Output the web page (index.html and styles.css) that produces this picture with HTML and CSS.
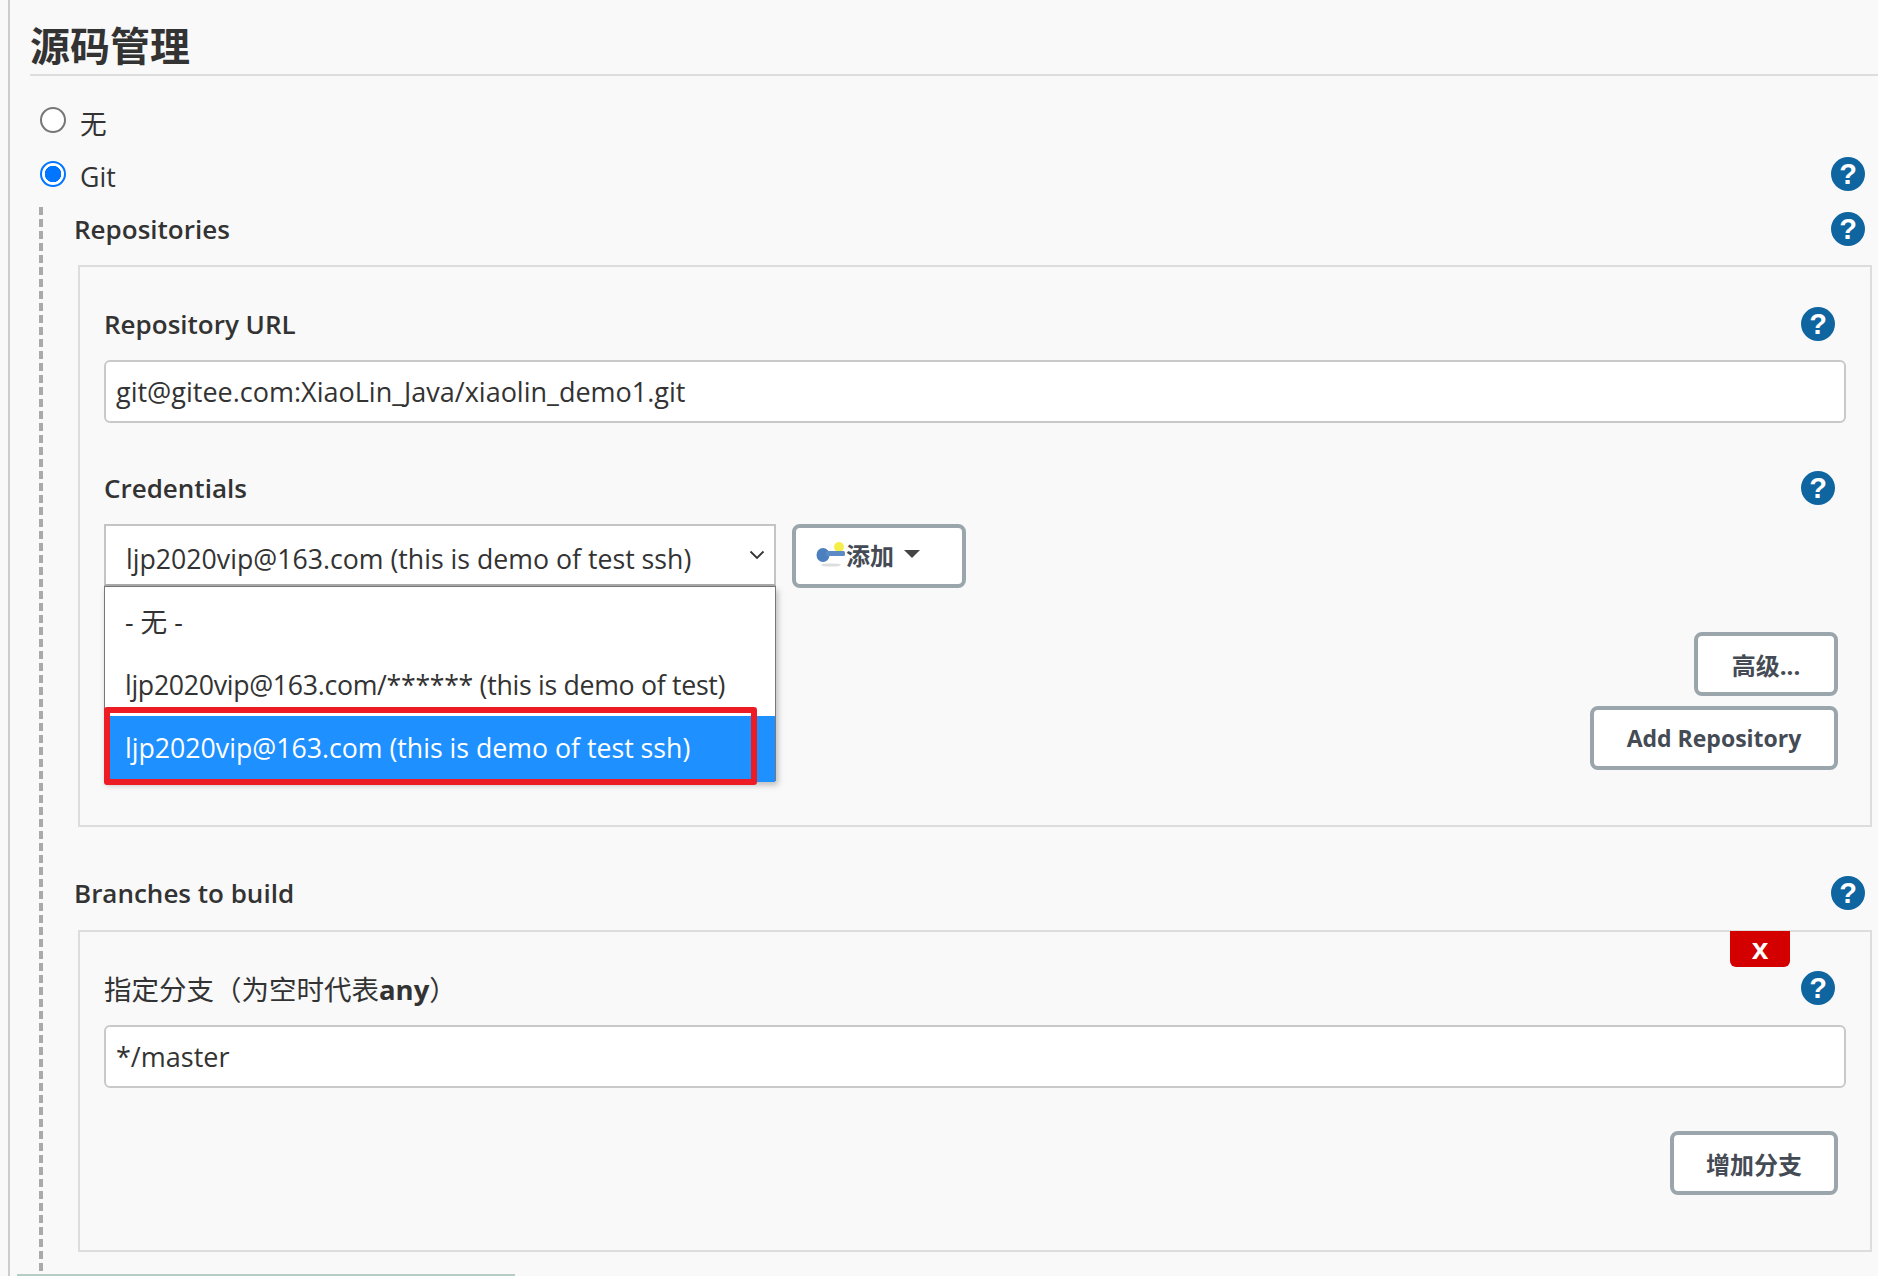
FILE: index.html
```html
<!DOCTYPE html>
<html lang="zh">
<head>
<meta charset="utf-8">
<title>源码管理</title>
<link rel="stylesheet" href="styles.css">
</head>
<body>
<div class="page">
  <h1 class="title">源码管理</h1>
  <div class="radio-row radio-none"><input class="radio" type="radio" name="scm"><span>无</span></div>
  <div class="radio-row radio-git"><input class="radio" type="radio" name="scm" checked><span>Git</span><span class="help help-outer">?</span></div>
  <div class="git-section">
    <div class="label-row repo-heading"><span class="label">Repositories</span><span class="help">?</span></div>
    <div class="box repo-box">
      <div class="label-row url-label"><span class="label">Repository URL</span><span class="help">?</span></div>
      <div class="field">git@gitee.com:XiaoLin_Java/xiaolin_demo1.git</div>
      <div class="label-row cred-label"><span class="label">Credentials</span><span class="help">?</span></div>
      <div class="cred-row">
        <div class="select">
          <span>ljp2020vip@163.com (this is demo of test ssh)</span>
          <svg class="chevron" viewBox="0 0 16 10" width="16" height="10"><path d="M1.5 1.5 L8 8 L14.5 1.5" fill="none" stroke="#333" stroke-width="1.8"/></svg>
          <div class="menu">
            <div class="option">- 无 -</div>
            <div class="option option-tight">ljp2020vip@163.com/****** (this is demo of test)</div>
            <div class="option option-active">ljp2020vip@163.com (this is demo of test ssh)</div>
          </div>
          <div class="annotation"></div>
        </div>
        <button class="btn btn-add">
          <svg class="key" viewBox="0 0 30 28" width="30" height="28"><circle cx="23" cy="7" r="5" fill="#f5ee4a"/><ellipse cx="15" cy="25" rx="10" ry="1.6" fill="#ddd"/><ellipse cx="7" cy="15" rx="6.5" ry="7" fill="#4c7fbe"/><rect x="10" y="11" width="19" height="5" rx="1.5" fill="#5b8bc7"/></svg>
          <span>添加</span><i class="caret"></i>
        </button>
      </div>
      <div class="actions actions-advanced"><button class="btn btn-adv">高级...</button></div>
      <div class="actions"><button class="btn btn-repo">Add Repository</button></div>
    </div>
    <div class="label-row branch-heading"><span class="label">Branches to build</span><span class="help">?</span></div>
    <div class="box branch-box">
      <button class="close">x</button>
      <div class="label-row spec-label"><span class="spec-text">指定分支（为空时代表<b>any</b>）</span><span class="help">?</span></div>
      <div class="field branch-field">*/master</div>
      <div class="actions actions-branch"><button class="btn btn-branch">增加分支</button></div>
    </div>
  </div>
  <div class="bottom-line"></div>
</div>
</body>
</html>
```
FILE: styles.css
```css
* { box-sizing: border-box; }
html, body { margin: 0; padding: 0; height: 1276px; overflow: hidden; }
body {
  background: #f9f9f9;
  color: #333;
  font-family: "Open Sans", "Noto Sans CJK SC", sans-serif;
  font-size: 26.7px;
}
.page {
  position: relative;
  height: 1276px;
  margin-left: 8px;
  border-left: 2px solid #ccc;
  padding-left: 20px;
}
.title {
  margin: 0;
  height: 76px;
  padding-top: 15px;
  border-bottom: 2px solid #ddd;
  font-family: "Noto Sans CJK SC", sans-serif;
  font-size: 40px;
  line-height: 58px;
  font-weight: 700;
  color: #333;
}
.radio-row {
  display: flex;
  align-items: center;
  padding-left: 10px;
  padding-right: 13px;
}
.radio-none { margin-top: 26px; height: 36px; }
.radio-git { margin-top: 18px; height: 36px; }
.radio-row span:nth-child(2) { margin-left: 14px; margin-top: 4px; }
.radio {
  appearance: none;
  flex: none;
  width: 26px;
  height: 26px;
  margin: 0;
  border: 2px solid #767676;
  border-radius: 50%;
  background: #fff;
}
.radio:checked {
  border-color: #0075ff;
  background: radial-gradient(circle, #0075ff 0, #0075ff 8px, #fff 8.5px);
}
.help {
  flex: none;
  width: 34px;
  height: 34px;
  border-radius: 50%;
  background: #0f659f;
  color: #fff;
  font-family: "Liberation Sans", sans-serif;
  font-size: 29px;
  font-weight: 700;
  line-height: 34px;
  text-align: center;
}
.help-outer { margin-left: auto; }
.git-section {
  margin-left: 9px;
  margin-top: 15px;
  padding-left: 39px;
  padding-right: 5px;
  height: 1069px;
  background-image: linear-gradient(to bottom, #aaa 0, #aaa 8px, transparent 8px);
  background-size: 4px 12px;
  background-repeat: repeat-y;
  background-position: 0 0;
}
.label-row {
  display: flex;
  justify-content: space-between;
  align-items: center;
}
.label { font-size: 26px; font-weight: 600; }
.repo-heading { padding-right: 8px; height: 58px; padding-bottom: 14px; margin-left: -4px; }
.box {
  border: 2px solid #ddd;
  position: relative;
  margin-right: 1px;
  padding: 0 28px 0 24px;
}
.repo-box { height: 562px; padding-top: 39px; }
.url-label, .cred-label, .spec-label { height: 36px; padding-right: 7px; }
.field {
  height: 63px;
  margin-top: 18px;
  margin-right: -4px;
  border: 2px solid #c9c9c9;
  border-radius: 6px;
  background: #fff;
  padding: 0 10px;
  font-size: 27px;
  line-height: 60px;
  white-space: nowrap;
}
.branch-field { margin-top: 19px; }
.cred-label { margin-top: 47px; }
.cred-row {
  display: flex;
  gap: 16px;
  margin-top: 18px;
}
.select {
  position: relative;
  width: 672px;
  height: 62px;
  border: 2px solid #c4c4c4;
  border-bottom-color: #aaa;
  background: #fff;
  padding-left: 20px;
  line-height: 66px;
  white-space: nowrap;
}
.chevron { position: absolute; right: 9px; top: 24px; }
.menu {
  position: absolute;
  left: -2px;
  top: 60px;
  width: 672px;
  height: 195px;
  border: 1px solid #777;
  border-bottom: 0;
  background: #fff;
  box-shadow: 2px 4px 6px rgba(0, 0, 0, .25);
  z-index: 2;
}
.option {
  height: 63px;
  padding-left: 20px;
  line-height: 63px;
  color: #333;
}
.option:first-child { margin-top: 3px; }
.option-tight { letter-spacing: -.3px; }
.option-active {
  height: 66px;
  background: #1e90ff;
  color: #fff;
}
.annotation {
  position: absolute;
  left: -2px;
  top: 181px;
  width: 653px;
  height: 78px;
  border: 6px solid #ed1c24;
  border-radius: 3px;
  z-index: 3;
}
.btn {
  display: flex;
  align-items: center;
  justify-content: center;
  height: 64px;
  border: 4px solid #9aa5ac;
  border-radius: 8px;
  background: #fff;
  color: #454b54;
  font-family: "Open Sans", "Noto Sans CJK SC", sans-serif;
  font-size: 24px;
  font-weight: 700;
  padding: 0;
}
.btn-add { width: 174px; padding-bottom: 4px; justify-content: flex-start; padding-left: 20px; }
.key { flex: none; }
.caret {
  width: 0;
  height: 0;
  margin-left: 10px;
  border: 8px solid transparent;
  border-top: 8px solid #444;
  border-bottom: 0;
}
.actions { display: flex; justify-content: flex-end; padding-right: 4px; }
.actions-advanced { margin-top: 44px; margin-bottom: 10px; }
.btn-adv { width: 144px; }
.btn-repo { width: 248px; font-size: 23px; }
.branch-heading { padding-right: 8px; height: 103px; padding-top: 28px; margin-left: -4px; }
.branch-box { height: 322px; padding-top: 38px; }
.close {
  position: absolute;
  right: 80px;
  top: -1px;
  width: 60px;
  height: 36px;
  border: 0;
  border-radius: 0 0 6px 6px;
  background: #d40000;
  color: #fff;
  font-family: "Liberation Sans", sans-serif;
  font-size: 30px;
  line-height: 36px;
  font-weight: 700;
  padding: 0;
}
.spec-text { font-size: 27.5px; }
.actions-branch { margin-top: 43px; }
.btn-branch { width: 168px; }
.bottom-line {
  position: absolute;
  left: 7px;
  bottom: 0;
  width: 498px;
  height: 2px;
  background: #b5cdc2;
}
```
